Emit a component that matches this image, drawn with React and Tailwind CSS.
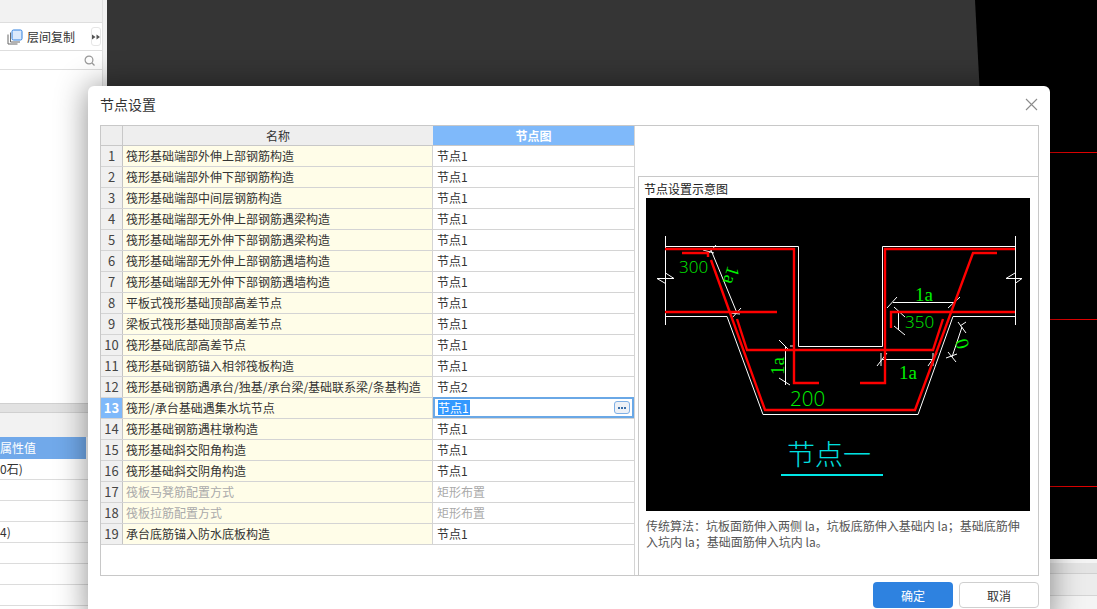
import React from "react";

const FONT = "font-['Noto_Sans_CJK_SC','Liberation_Sans',sans-serif]";

const rows = [
  ["筏形基础端部外伸上部钢筋构造", "节点1"],
  ["筏形基础端部外伸下部钢筋构造", "节点1"],
  ["筏形基础端部中间层钢筋构造", "节点1"],
  ["筏形基础端部无外伸上部钢筋遇梁构造", "节点1"],
  ["筏形基础端部无外伸下部钢筋遇梁构造", "节点1"],
  ["筏形基础端部无外伸上部钢筋遇墙构造", "节点1"],
  ["筏形基础端部无外伸下部钢筋遇墙构造", "节点1"],
  ["平板式筏形基础顶部高差节点", "节点1"],
  ["梁板式筏形基础顶部高差节点", "节点1"],
  ["筏形基础底部高差节点", "节点1"],
  ["筏形基础钢筋锚入相邻筏板构造", "节点1"],
  ["筏形基础钢筋遇承台/独基/承台梁/基础联系梁/条基构造", "节点2"],
  ["筏形/承台基础遇集水坑节点", "节点1"],
  ["筏形基础钢筋遇柱墩构造", "节点1"],
  ["筏形基础斜交阳角构造", "节点1"],
  ["筏形基础斜交阴角构造", "节点1"],
  ["筏板马凳筋配置方式", "矩形布置"],
  ["筏板拉筋配置方式", "矩形布置"],
  ["承台底筋锚入防水底板构造", "节点1"],
];

function Row({ n, name, value }) {
  const selected = n === 13;
  const muted = n === 17 || n === 18;
  return (
    <div className="flex h-[21px] shrink-0 border-b border-[#d4d4d4]">
      <div
        className={
          "w-[22px] shrink-0 flex items-center justify-center border-r border-[#c4c4c4] text-[13px] " +
          (selected ? "bg-[#7fb9fa] text-white font-bold" : "bg-[#f0f0f0] text-[#444]")
        }
      >
        {n}
      </div>
      <div
        className={
          "w-[310px] shrink-0 bg-[#fffde8] pl-[3px] flex items-center whitespace-nowrap border-r border-[#d4d4d4] " +
          (muted ? "text-[#aaa]" : "text-[#333]")
        }
      >
        {name}
      </div>
      {selected ? (
        <div className="flex-1 relative -mt-px h-[21px] border-2 border-[#6aa8e6] bg-white flex items-center pl-[3px] pr-[2px] justify-between z-10">
          <span className="bg-[#3399ff] text-white leading-[15px] pr-[1px]">{value}</span>
          <span className="w-[16px] h-[13px] rounded-[3px] border border-[#7fb0e6] bg-[#eef1f6] flex items-center justify-center gap-[1px]">
            <i className="w-[2px] h-[2px] bg-[#3a6ea8]" />
            <i className="w-[2px] h-[2px] bg-[#3a6ea8]" />
            <i className="w-[2px] h-[2px] bg-[#3a6ea8]" />
          </span>
        </div>
      ) : (
        <div className={"flex-1 pl-[4px] flex items-center " + (muted ? "text-[#aaa]" : "text-[#333]")}>
          {value}
        </div>
      )}
    </div>
  );
}

function Diagram() {
  const white = { stroke: "#fff", strokeWidth: 1, fill: "none" };
  const red = { stroke: "#f00", strokeWidth: 2.4, fill: "none" };
  const sansLight = "'Open Sans',sans-serif";
  return (
    <svg viewBox="646 198 384 313" className="block w-[384px] h-[313px] bg-black shrink-0">
      <g {...white}>
        <path d="M665.5 236V325M665.5 246.5H798.5V346.5H882.5V246.5H1015M1015.5 236V325" />
        <path d="M665 316.5H727L763 414.5H918L953 316.5H1015" />
        <path d="M711 250L737 313" />
        {/* break symbols */}
        <path d="M657 278.5H674L665.5 273M657 278.5L665.5 283.5" />
        <path d="M1006 278.5H1022L1015 283.5M1006 278.5L1015 273" />
        {/* 1a top right */}
        <path d="M893 302.5H955" />
        <path d="M887 308L897 297M948 308L960 297" />
        {/* 350 */}
        <path d="M898.5 312V330M894 307L905 317M894 326L905 335" />
        {/* 1a bottom right */}
        <path d="M882 359.5H933M881 353V366M933 353V366M877 366L887 353M928 366L937 353" />
        {/* 1a left */}
        <path d="M785.5 347V385M779 340L790 351M779 378L790 385M790 346H794" />
        {/* 0 */}
        <path d="M962 327L952 357M958 322L966 333M960 326L966 322M948 352L956 362M946 358L957 354" />
        {/* la ticks */}
        <path d="M707 255L716 245M703 250L714 253M732 318L741 308M730 313L740 314" />
      </g>
      <g {...red}>
        <path d="M665 249H794V383H819" />
        <path d="M682 253H708V257" />
        <path d="M711 260L765 410H915L973 253H997" />
        <path d="M665 312H777" />
        <path d="M891 328V312H1015" />
        <path d="M737 319L747 350H933L943 319" />
        <path d="M1015 249H885V383H860" />
      </g>
      <g fill="#00f000" fontFamily="'Liberation Serif',serif" fontSize="19">
        <text x="679" y="273" fontFamily={sansLight} fontWeight="300" fontSize="17">300</text>
        <text x="0" y="0" transform="translate(728 265) rotate(107)">1a</text>
        <text x="915" y="301">1a</text>
        <text x="905" y="328" fontFamily={sansLight} fontWeight="300" fontSize="17">350</text>
        <text x="0" y="0" transform="translate(784 375) rotate(-90)">1a</text>
        <text x="899" y="379">1a</text>
        <text x="0" y="6" textAnchor="middle" transform="translate(962 344) rotate(72)">0</text>
        <text x="790" y="406" fontFamily={sansLight} fontWeight="300" fontSize="20.5">200</text>
      </g>
      <text x="787" y="465" fill="#00e0e0" fontSize="28" fontFamily="'Noto Sans CJK SC',sans-serif" fontWeight="300">节点一</text>
      <path d="M781 475H883" stroke="#00e6e6" strokeWidth="2" />
    </svg>
  );
}

function LeftPanel() {
  return (
    <div className="w-[107px] shrink-0 h-full bg-[#f2f2f2]">
      <div className="w-[103px] h-full bg-white border-r border-[#e0e0e0] flex flex-col overflow-hidden">
        <div className="h-[23px] shrink-0 bg-[#f2f2f2] border-b border-[#dedede]" />
        <div className="h-[28px] shrink-0 border-b border-[#dedede] flex items-center pl-[7px] gap-[4px] text-[#333]">
          <svg width="16" height="16" viewBox="0 0 16 16" fill="none" className="shrink-0">
            <path d="M1 5.5V15H10.5" stroke="#666" />
            <path d="M3.5 3.5V13H13" stroke="#666" />
            <rect x="5" y="1" width="10" height="10" rx="1.5" fill="#dbe9fb" stroke="#2f80e0" />
          </svg>
          <span className="whitespace-nowrap">层间复制</span>
          <span className="ml-auto mr-[1px] w-[10px] h-[19px] border border-[#e6e6e6] rounded-[3px] flex items-center justify-center">
            <svg width="8" height="6" viewBox="0 0 8 6" fill="#555">
              <path d="M0 0.5L3.5 3L0 5.5ZM4.5 0.5L8 3L4.5 5.5Z" />
            </svg>
          </span>
        </div>
        <div className="h-[19px] shrink-0 border-b border-[#dedede] flex items-center justify-end pr-[7px]">
          <svg width="11" height="11" viewBox="0 0 11 11" fill="none" stroke="#999" strokeWidth="1.2">
            <circle cx="5" cy="5" r="3.9" />
            <path d="M8 8L10.5 10.5" />
          </svg>
        </div>
        <div className="h-[333px] shrink-0" />
        <div className="h-[10px] shrink-0 bg-[#e2e2e2] border-y border-[#d0d0d0]" />
        <div className="h-[24px] shrink-0 bg-[#f2f2f2]" />
        <div className="h-[22px] shrink-0 w-[86px] bg-[#71a9ea] text-white flex items-center whitespace-nowrap">
          属性值
        </div>
        {["0石)", "", "", "4)", "", "", "", ""].map((t, i) => (
          <div key={i} className="h-[21px] shrink-0 border-b border-[#dcdcdc] flex items-center whitespace-nowrap text-[#333]">
            {t}
          </div>
        ))}
      </div>
    </div>
  );
}

export default function App() {
  return (
    <div className={"relative w-[1097px] h-[609px] overflow-hidden flex bg-black text-[12px] " + FONT}>
      <LeftPanel />
      <div className="flex-1 relative bg-black">
        <div className="absolute left-0 top-0 h-[96px] w-[873px] bg-[#353535] [clip-path:polygon(0_0,868px_0,873px_96px,0_96px)]" />
        <div className="absolute right-0 left-[880px] top-[152px] h-px bg-[#e00000]" />
        <div className="absolute right-0 left-[880px] top-[319px] h-px bg-[#e00000]" />
        <div className="absolute right-0 left-[880px] top-[486px] h-px bg-[#e00000]" />
        <div className="absolute left-[943px] right-0 top-[559px] bottom-0 flex flex-col">
          <div className="h-[4px] bg-[#f4f4f4]" />
          <div className="h-[11px] bg-[#e4e4e4] border-b border-[#d0d0d0]" />
          <div className="h-[22px] bg-[#ececec] border-b border-[#d4d4d4]" />
          <div className="flex-1 bg-[#f4f4f4]" />
        </div>
      </div>

      <div className="absolute left-[88px] top-[86px] w-[962px] h-[540px] bg-white rounded-[6px] flex flex-col shadow-[0_0_32px_rgba(0,0,0,0.45)]">
        <div className="h-[39px] shrink-0 flex items-center justify-between pl-[12px] pr-[12px] pb-[2px]">
          <span className="text-[14px] text-[#333]">节点设置</span>
          <svg width="13" height="13" viewBox="0 0 13 13" stroke="#8c8c8c" strokeWidth="1.1">
            <path d="M1 1L12 12M12 1L1 12" />
          </svg>
        </div>
        <div className="ml-[12px] w-[939px] h-[451px] shrink-0 border border-[#c8c8c8] flex">
          <div className="w-[534px] shrink-0 flex flex-col border-r border-[#d4d4d4]">
            <div className="flex h-[20px] shrink-0 border-b border-[#c8c8c8]">
              <div className="w-[22px] shrink-0 bg-[#eeeeee] border-r border-[#c8c8c8]" />
              <div className="w-[310px] shrink-0 bg-[#eeeeee] flex items-center justify-center text-[#333] pt-px">名称</div>
              <div className="flex-1 bg-[#7fb9fa] text-white font-bold flex items-center justify-center pt-px">节点图</div>
            </div>
            {rows.map((r, i) => (
              <Row key={i} n={i + 1} name={r[0]} value={r[1]} />
            ))}
          </div>
          <div className="flex-1 flex flex-col pl-[3px]">
            <div className="h-[50px] shrink-0" />
            <div className="flex-1 border-l border-t border-[#c8c8c8] pl-[7px] flex flex-col">
              <div className="h-[21px] shrink-0 flex items-end -ml-[2px] text-[#222]">节点设置示意图</div>
              <Diagram />
              <p className="mt-[7px] w-[384px] text-[12px] leading-[16px] text-[#555]">
                传统算法：坑板面筋伸入两侧 la，坑板底筋伸入基础内 la；基础底筋伸入坑内 la；基础面筋伸入坑内 la。
              </p>
            </div>
          </div>
        </div>
        <div className="flex justify-end gap-[6px] pr-[11px] pt-[6px]">
          <button className="w-[80px] h-[26px] rounded-[4px] bg-[#2e82e0] text-white pt-px">确定</button>
          <button className="w-[80px] h-[26px] rounded-[4px] bg-white border border-[#cfcfcf] text-[#333] pt-px">取消</button>
        </div>
      </div>
    </div>
  );
}
